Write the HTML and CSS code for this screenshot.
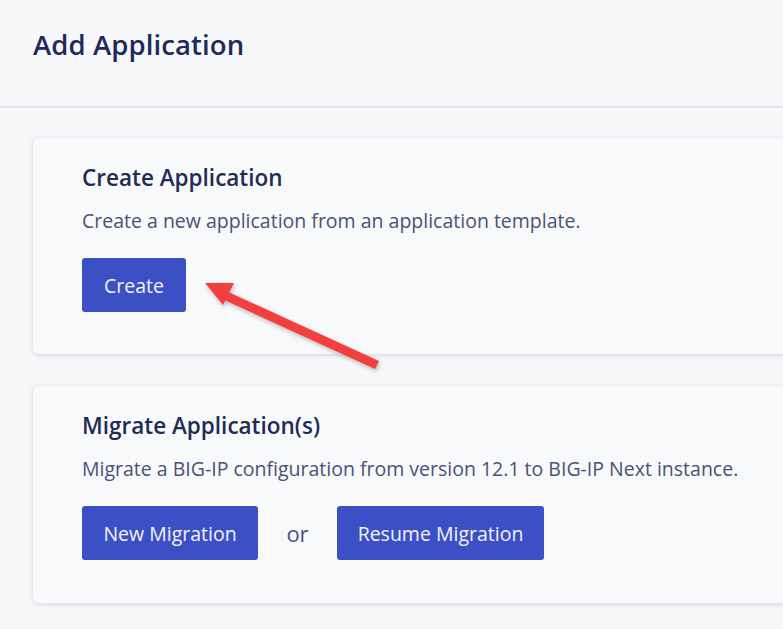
FILE: index.html
```html
<!DOCTYPE html>
<html>
<head>
<meta charset="utf-8">
<link rel="stylesheet" href="styles.css">
</head>
<body>
<header class="page-header">
  <h1 class="page-title">Add Application</h1>
</header>
<main class="content">
  <section class="card card-create">
    <h2 class="card-title">Create Application</h2>
    <p class="card-desc">Create a new application from an application template.</p>
    <div class="actions">
      <button class="btn btn-create">Create</button>
    </div>
  </section>
  <section class="card card-migrate">
    <h2 class="card-title">Migrate Application(s)</h2>
    <p class="card-desc">Migrate a BIG-IP configuration from version 12.1 to BIG-IP Next instance.</p>
    <div class="actions">
      <button class="btn btn-new">New Migration</button>
      <span class="or">or</span>
      <button class="btn btn-resume">Resume Migration</button>
    </div>
  </section>
</main>
<svg class="arrow" width="200" height="110" viewBox="0 0 200 110">
  <defs>
    <filter id="sh" x="-20%" y="-20%" width="140%" height="140%">
      <feDropShadow dx="1" dy="2" stdDeviation="2" flood-color="#000" flood-opacity="0.28"/>
    </filter>
  </defs>
  <g filter="url(#sh)" fill="#f24141">
    <polygon points="5,3 34,3 23,25"/>
    <polygon points="24,10 179,81 175,89 20,18"/>
  </g>
</svg>
</body>
</html>
```

FILE: styles.css
```css
html, body {
  margin: 0;
  padding: 0;
}
body {
  background: #f7f8fa;
  font-family: "Open Sans", "Lato", sans-serif;
  color: #1f2b5b;
  width: 783px;
  height: 629px;
  overflow: hidden;
  position: relative;
}
.page-header {
  height: 108px;
  box-sizing: border-box;
  padding: 28px 33px 0;
  border-bottom: 2px solid #e0e3ea;
}
.page-title {
  margin: 0;
  font-size: 27.5px;
  font-weight: 600;
  line-height: 34px;
  color: #1e2a5c;
  letter-spacing: 0.1px;
}
.content {
  padding: 30px 0 0 33px;
  display: flex;
  flex-direction: column;
  gap: 32px;
}
.card {
  width: 800px;
  box-sizing: border-box;
  background: #f8f9fb;
  border-radius: 6px;
  box-shadow: 0 1px 5px rgba(40, 50, 80, 0.18);
  padding: 26px 49px 0;
}
.card-create { height: 216px; }
.card-migrate { height: 217px; }
.card-title {
  margin: 0;
  font-size: 22.5px;
  font-weight: 600;
  line-height: 28px;
  color: #212c55;
}
.card-desc {
  margin: 17px 0 0;
  font-size: 19.5px;
  line-height: 24px;
  color: #4a5277;
}
.actions {
  margin-top: 25px;
  display: flex;
  align-items: center;
}
.btn {
  height: 54px;
  border: none;
  border-radius: 3px;
  background: #3a50c4;
  color: #f3f3ff;
  font-family: inherit;
  font-size: 19.5px;
  padding: 0;
}
.btn-create { width: 104px; }
.btn-new { width: 176px; }
.btn-resume { width: 207px; }
.or {
  width: 79px;
  text-align: center;
  font-size: 22px;
  color: #4a5277;
}
.arrow {
  position: absolute;
  left: 200px;
  top: 280px;
}
```
